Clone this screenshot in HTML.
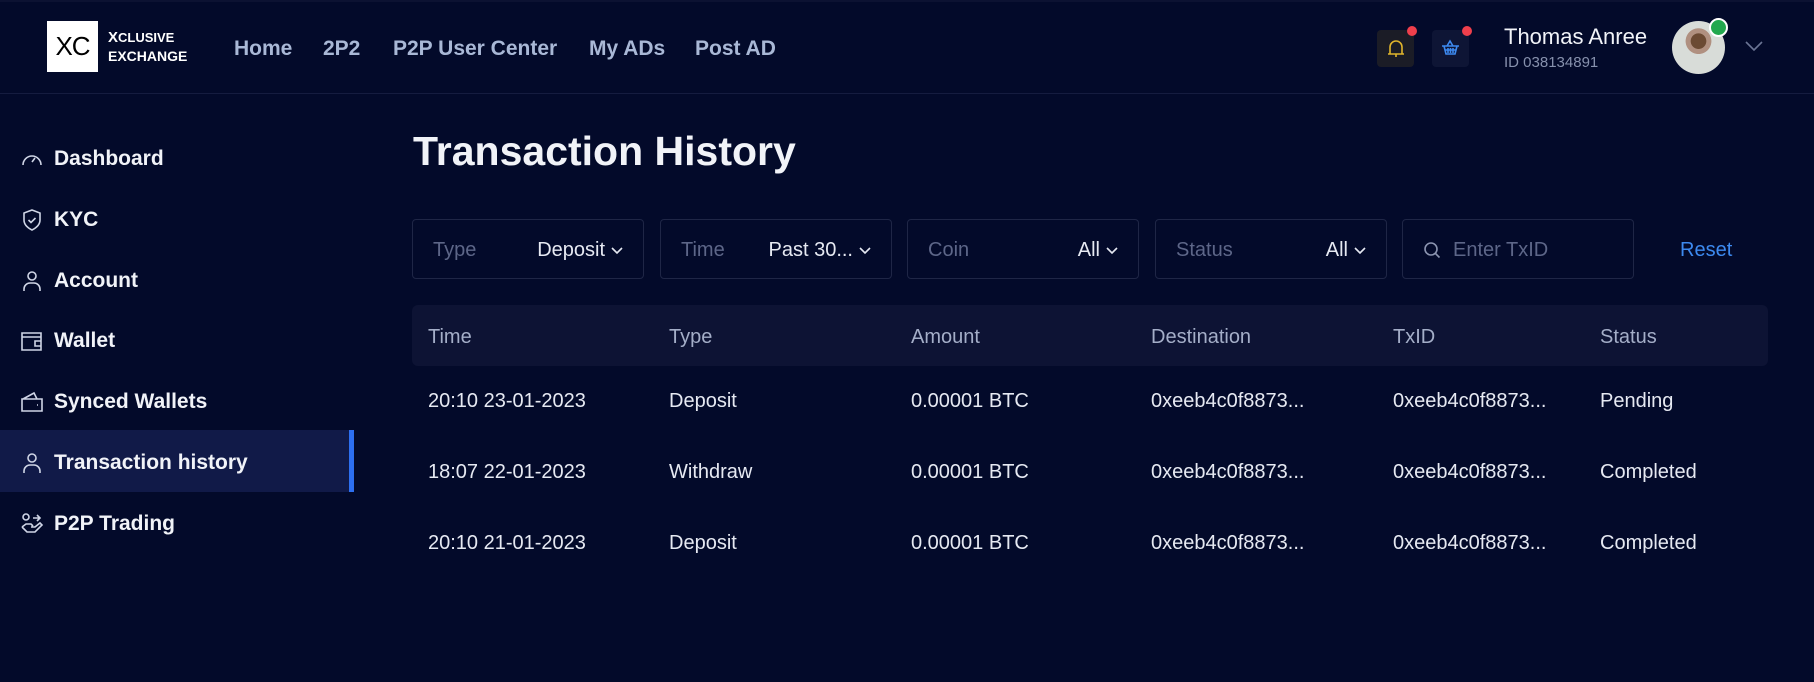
<!DOCTYPE html>
<html><head><meta charset="utf-8"><style>
*{margin:0;padding:0;box-sizing:border-box}
body{width:1814px;height:682px;background:#030a2a;font-family:"Liberation Sans",sans-serif;color:#e6e9f2;position:relative;overflow:hidden}
.a{position:absolute;white-space:nowrap}
.hdr{position:absolute;left:0;top:0;width:1814px;height:94px;border-bottom:1px solid #151c3f;border-top:2px solid #0c1232}
.nav{font-size:21px;font-weight:bold;color:#a9b8d6;top:37px}
.side{font-size:21px;font-weight:bold;color:#f1f3f8;left:54px}
.ic{left:20px;width:24px;height:24px}
.f{position:absolute;top:219px;width:232px;height:60px;border:1px solid #1f2646;border-radius:4px;font-size:20px}
.f .l{position:absolute;left:20px;top:19px;color:#5d6688}
.f .v{position:absolute;right:20px;top:19px;color:#e6e9f2}
.f .v svg{margin-left:6px;vertical-align:middle}
.th{top:326px;font-size:20px;color:#a4aec8}
.td{font-size:20px;color:#e6e9f2}
</style></head><body>
<div class="hdr"></div>
<div class="a" style="left:47px;top:21px;width:51px;height:51px;background:#fff;color:#000;font-size:26px;line-height:51px;text-align:center;letter-spacing:-1px">XC</div>
<div class="a" style="left:108px;top:29px;font-size:15px;font-weight:bold;line-height:18px;color:#fff">X<span style="font-size:13px">CLUSIVE</span><br><span style="font-size:14px">EXCHANGE</span></div>
<div class="a nav" style="left:234px">Home</div>
<div class="a nav" style="left:323px">2P2</div>
<div class="a nav" style="left:393px">P2P User Center</div>
<div class="a nav" style="left:589px">My ADs</div>
<div class="a nav" style="left:695px">Post AD</div>
<div class="a" style="left:1377px;top:30px;width:37px;height:37px;background:#1b1c26;border-radius:4px"></div>
<svg class="a" style="left:1386px;top:38px" width="20" height="22" viewBox="0 0 20 22" fill="none" stroke="#e0b42c" stroke-width="1.6"><path d="M4 16V9a6 6 0 0 1 12 0v7H4zM2 16h16M10 16v3"/></svg>
<div class="a" style="left:1407px;top:26px;width:10px;height:10px;border-radius:50%;background:#ef3f4c"></div>
<div class="a" style="left:1432px;top:30px;width:37px;height:37px;background:#0e1535;border-radius:4px"></div>
<svg class="a" style="left:1440px;top:39px" width="21" height="18" viewBox="0 0 21 18" fill="none" stroke="#3d8af0" stroke-width="1.6"><path d="M2 7h17M4 7l2 8h9l2-8M7 7l3-5 3 5M8 9v5M10.5 9v5M13 9v5M4.5 11h12"/></svg>
<div class="a" style="left:1462px;top:26px;width:10px;height:10px;border-radius:50%;background:#ef3f4c"></div>
<div class="a" style="left:1504px;top:24px;font-size:22px;color:#f1f3f8">Thomas Anree</div>
<div class="a" style="left:1504px;top:54px;font-size:15px;color:#8791ad">ID 038134891</div>
<div class="a" style="left:1672px;top:21px;width:53px;height:53px;border-radius:50%;background:radial-gradient(circle at 50% 38%,#6b4a33 0 18%,#b09080 19% 30%,#d8dcd8 31%)"></div>
<div class="a" style="left:1709px;top:18px;width:19px;height:19px;border-radius:50%;background:#22a84e;border:2px solid #fff"></div>
<svg class="a" style="left:1744px;top:40px" width="20" height="12" viewBox="0 0 20 12" fill="none" stroke="#6b7594" stroke-width="1.6"><path d="M2 2l8 8 8-8"/></svg>

<div class="a" style="left:0;top:430px;width:354px;height:62px;background:#111a48"></div>
<div class="a" style="left:349px;top:430px;width:5px;height:62px;background:#2d6ff0"></div>
<svg class="a ic" style="top:147px" viewBox="0 0 24 24" fill="none" stroke="#cfd5e6" stroke-width="1.6"><path d="M3 18a9 9 0 1 1 18 0M12 15l3-4"/></svg>
<div class="a side" style="top:147px">Dashboard</div>
<svg class="a ic" style="top:208px" viewBox="0 0 24 24" fill="none" stroke="#cfd5e6" stroke-width="1.6"><path d="M12 2l8 3v7c0 5-4 8-8 10-4-2-8-5-8-10V5z M8.5 12l2.5 2.5 4.5-4.5"/></svg>
<div class="a side" style="top:208px">KYC</div>
<svg class="a ic" style="top:269px" viewBox="0 0 24 24" fill="none" stroke="#cfd5e6" stroke-width="1.6"><circle cx="12" cy="7" r="4"/><path d="M4 22v-2a6 6 0 0 1 6-6h4a6 6 0 0 1 6 6v2"/></svg>
<div class="a side" style="top:269px">Account</div>
<svg class="a ic" style="top:329px" viewBox="0 0 24 24" fill="none" stroke="#cfd5e6" stroke-width="1.6"><path d="M2 4h19v17H2zM2 8h19M15 12h6v5h-6z"/></svg>
<div class="a side" style="top:329px">Wallet</div>
<svg class="a ic" style="top:390px" viewBox="0 0 24 24" fill="none" stroke="#cfd5e6" stroke-width="1.6"><path d="M2 9h20v12H2zM3 9l11-6 3 6M17 15h1"/></svg>
<div class="a side" style="top:390px">Synced Wallets</div>
<svg class="a ic" style="top:451px" viewBox="0 0 24 24" fill="none" stroke="#cfd5e6" stroke-width="1.6"><circle cx="12" cy="7" r="4"/><path d="M4 22v-2a6 6 0 0 1 6-6h4a6 6 0 0 1 6 6v2"/></svg>
<div class="a side" style="top:451px">Transaction history</div>
<svg class="a ic" style="top:512px" viewBox="0 0 24 24" fill="none" stroke="#cfd5e6" stroke-width="1.6"><circle cx="6" cy="5" r="3"/><path d="M2 15l5 5h8l7-7-2-2-5 4h-4M2 15l4-3h5l2 2M13 6h7M17 3l3 3-3 3"/></svg>
<div class="a side" style="top:512px">P2P Trading</div>

<div class="a" style="left:413px;top:128px;font-size:41px;font-weight:bold;color:#f1f3f8">Transaction History</div>

<div class="f" style="left:412px"><span class="l">Type</span><span class="v">Deposit<svg width="12" height="8" viewBox="0 0 12 8" fill="none" stroke="#e6e9f2" stroke-width="1.6"><path d="M1 1l5 5 5-5"/></svg></span></div>
<div class="f" style="left:660px"><span class="l">Time</span><span class="v">Past 30...<svg width="12" height="8" viewBox="0 0 12 8" fill="none" stroke="#e6e9f2" stroke-width="1.6"><path d="M1 1l5 5 5-5"/></svg></span></div>
<div class="f" style="left:907px"><span class="l">Coin</span><span class="v">All<svg width="12" height="8" viewBox="0 0 12 8" fill="none" stroke="#e6e9f2" stroke-width="1.6"><path d="M1 1l5 5 5-5"/></svg></span></div>
<div class="f" style="left:1155px"><span class="l">Status</span><span class="v">All<svg width="12" height="8" viewBox="0 0 12 8" fill="none" stroke="#e6e9f2" stroke-width="1.6"><path d="M1 1l5 5 5-5"/></svg></span></div>
<div class="f" style="left:1402px"><svg style="position:absolute;left:20px;top:21px" width="18" height="18" viewBox="0 0 18 18" fill="none" stroke="#8b94b0" stroke-width="1.6"><circle cx="8" cy="8" r="6"/><path d="M12.5 12.5l4 4"/></svg><span class="l" style="left:50px">Enter TxID</span></div>
<div class="a" style="left:1680px;top:239px;font-size:20px;color:#3d8af0">Reset</div>

<div class="a" style="left:412px;top:305px;width:1356px;height:61px;background:#0d1334;border-radius:6px"></div>
<div class="a th" style="left:428px">Time</div><div class="a th" style="left:669px">Type</div><div class="a th" style="left:911px">Amount</div><div class="a th" style="left:1151px">Destination</div><div class="a th" style="left:1393px">TxID</div><div class="a th" style="left:1600px">Status</div>

<div class="a td" style="left:428px;top:390px">20:10 23-01-2023</div><div class="a td" style="left:669px;top:390px">Deposit</div><div class="a td" style="left:911px;top:390px">0.00001 BTC</div><div class="a td" style="left:1151px;top:390px">0xeeb4c0f8873...</div><div class="a td" style="left:1393px;top:390px">0xeeb4c0f8873...</div><div class="a td" style="left:1600px;top:390px">Pending</div>
<div class="a td" style="left:428px;top:461px">18:07 22-01-2023</div><div class="a td" style="left:669px;top:461px">Withdraw</div><div class="a td" style="left:911px;top:461px">0.00001 BTC</div><div class="a td" style="left:1151px;top:461px">0xeeb4c0f8873...</div><div class="a td" style="left:1393px;top:461px">0xeeb4c0f8873...</div><div class="a td" style="left:1600px;top:461px">Completed</div>
<div class="a td" style="left:428px;top:532px">20:10 21-01-2023</div><div class="a td" style="left:669px;top:532px">Deposit</div><div class="a td" style="left:911px;top:532px">0.00001 BTC</div><div class="a td" style="left:1151px;top:532px">0xeeb4c0f8873...</div><div class="a td" style="left:1393px;top:532px">0xeeb4c0f8873...</div><div class="a td" style="left:1600px;top:532px">Completed</div>
</body></html>
